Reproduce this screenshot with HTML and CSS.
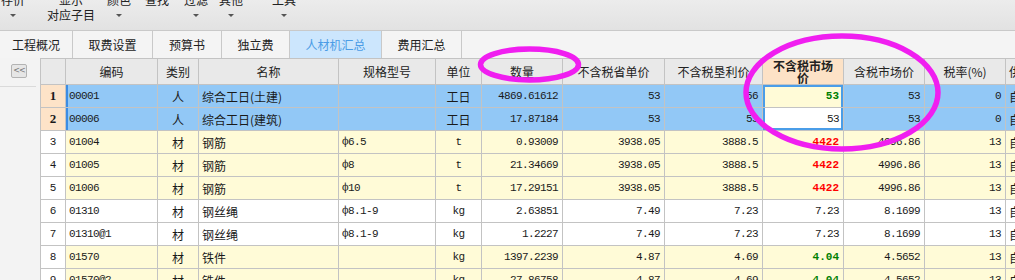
FILE: index.html
```html
<!DOCTYPE html>
<html lang="zh">

<head>
    <meta charset="UTF-8">
    <title>人材机汇总</title>
    <link rel="stylesheet" href="styles.css">
</head>

<body>
    <!-- Toolbar (scrolled, top labels clipped) -->
    <div class="toolbar">
        <div class="tool t1"><span class="lbl">存价</span><i class="arr"></i></div>
        <div class="tool t2"><span class="lbl">显示</span><span class="sub">对应子目</span></div>
        <div class="tool t3"><span class="lbl">颜色</span><i class="arr"></i></div>
        <div class="tool t4"><span class="lbl">查找</span></div>
        <div class="tool t5"><span class="lbl">过滤</span><i class="arr"></i></div>
        <div class="tool t6"><span class="lbl">其他</span><i class="arr"></i></div>
        <div class="tool t7"><span class="lbl">工具</span><i class="arr"></i></div>
    </div>

    <!-- Tabs -->
    <div class="tabs">
        <div class="tab w73">工程概况</div>
        <div class="tab w80">取费设置</div>
        <div class="tab w69">预算书</div>
        <div class="tab w68">独立费</div>
        <div class="tab w92 active">人材机汇总</div>
        <div class="tab w80">费用汇总</div>
    </div>

    <div class="main">
        <div class="side">
            <div class="side-top"><button class="fold">&lt;&lt;</button></div>
        </div>

        <div class="grid-wrap">
            <table class="grid">
                <colgroup>
                    <col class="c-no">
                    <col class="c-code">
                    <col class="c-type">
                    <col class="c-name">
                    <col class="c-spec">
                    <col class="c-unit">
                    <col class="c-qty">
                    <col class="c-p1">
                    <col class="c-p2">
                    <col class="c-p3">
                    <col class="c-p4">
                    <col class="c-rate">
                    <col class="c-src">
                </colgroup>
                <thead>
                    <tr>
                        <th></th>
                        <th>编码</th>
                        <th>类别</th>
                        <th>名称</th>
                        <th>规格型号</th>
                        <th>单位</th>
                        <th>数量</th>
                        <th>不含税省单价</th>
                        <th>不含税垦利价</th>
                        <th class="hot">不含税市场<br>价</th>
                        <th>含税市场价</th>
                        <th>税率(%)</th>
                        <th class="left">供货方式</th>
                    </tr>
                </thead>
                <tbody>
                    <tr class="sel">
                        <td class="no">1</td>
                        <td class="code">00001</td>
                        <td class="mid">人</td>
                        <td>综合工日(土建)</td>
                        <td></td>
                        <td class="mid">工日</td>
                        <td class="n">4869.61612</td>
                        <td class="n">53</td>
                        <td class="n">56</td>
                        <td class="n cur1 green">53</td>
                        <td class="n">53</td>
                        <td class="n">0</td>
                        <td>自行采购</td>
                    </tr>
                    <tr class="sel">
                        <td class="no">2</td>
                        <td class="code">00006</td>
                        <td class="mid">人</td>
                        <td>综合工日(建筑)</td>
                        <td></td>
                        <td class="mid">工日</td>
                        <td class="n">17.87184</td>
                        <td class="n">53</td>
                        <td class="n">53</td>
                        <td class="n cur2">53</td>
                        <td class="n">53</td>
                        <td class="n">0</td>
                        <td>自行采购</td>
                    </tr>
                    <tr class="yel">
                        <td class="no">3</td>
                        <td class="code">01004</td>
                        <td class="mid">材</td>
                        <td>钢筋</td>
                        <td class="spec">ф6.5</td>
                        <td class="mid mono">t</td>
                        <td class="n">0.93009</td>
                        <td class="n">3938.05</td>
                        <td class="n">3888.5</td>
                        <td class="n red">4422</td>
                        <td class="n">4996.86</td>
                        <td class="n">13</td>
                        <td>自行采购</td>
                    </tr>
                    <tr class="yel">
                        <td class="no">4</td>
                        <td class="code">01005</td>
                        <td class="mid">材</td>
                        <td>钢筋</td>
                        <td class="spec">ф8</td>
                        <td class="mid mono">t</td>
                        <td class="n">21.34669</td>
                        <td class="n">3938.05</td>
                        <td class="n">3888.5</td>
                        <td class="n red">4422</td>
                        <td class="n">4996.86</td>
                        <td class="n">13</td>
                        <td>自行采购</td>
                    </tr>
                    <tr class="yel">
                        <td class="no">5</td>
                        <td class="code">01006</td>
                        <td class="mid">材</td>
                        <td>钢筋</td>
                        <td class="spec">ф10</td>
                        <td class="mid mono">t</td>
                        <td class="n">17.29151</td>
                        <td class="n">3938.05</td>
                        <td class="n">3888.5</td>
                        <td class="n red">4422</td>
                        <td class="n">4996.86</td>
                        <td class="n">13</td>
                        <td>自行采购</td>
                    </tr>
                    <tr>
                        <td class="no">6</td>
                        <td class="code">01310</td>
                        <td class="mid">材</td>
                        <td>钢丝绳</td>
                        <td class="spec">ф8.1-9</td>
                        <td class="mid mono">kg</td>
                        <td class="n">2.63851</td>
                        <td class="n">7.49</td>
                        <td class="n">7.23</td>
                        <td class="n">7.23</td>
                        <td class="n">8.1699</td>
                        <td class="n">13</td>
                        <td>自行采购</td>
                    </tr>
                    <tr>
                        <td class="no">7</td>
                        <td class="code">01310@1</td>
                        <td class="mid">材</td>
                        <td>钢丝绳</td>
                        <td class="spec">ф8.1-9</td>
                        <td class="mid mono">kg</td>
                        <td class="n">1.2227</td>
                        <td class="n">7.49</td>
                        <td class="n">7.23</td>
                        <td class="n">7.23</td>
                        <td class="n">8.1699</td>
                        <td class="n">13</td>
                        <td>自行采购</td>
                    </tr>
                    <tr class="yel">
                        <td class="no">8</td>
                        <td class="code">01570</td>
                        <td class="mid">材</td>
                        <td>铁件</td>
                        <td></td>
                        <td class="mid mono">kg</td>
                        <td class="n">1397.2239</td>
                        <td class="n">4.87</td>
                        <td class="n">4.69</td>
                        <td class="n green">4.04</td>
                        <td class="n">4.5652</td>
                        <td class="n">13</td>
                        <td>自行采购</td>
                    </tr>
                    <tr class="yel">
                        <td class="no">9</td>
                        <td class="code">01570@2</td>
                        <td class="mid">材</td>
                        <td>铁件</td>
                        <td></td>
                        <td class="mid mono">kg</td>
                        <td class="n">27.86758</td>
                        <td class="n">4.87</td>
                        <td class="n">4.69</td>
                        <td class="n green">4.04</td>
                        <td class="n">4.5652</td>
                        <td class="n">13</td>
                        <td>自行采购</td>
                    </tr>
                </tbody>
            </table>
        </div>
    </div>

    <!-- Hand-drawn annotation rings -->
    <svg class="marks" width="1015" height="280" viewBox="0 0 1015 280">
        <ellipse cx="529.5" cy="64.5" rx="49" ry="15.5" />
        <ellipse cx="842" cy="92.5" rx="96" ry="56.5" />
    </svg>
</body>

</html>
```

FILE: styles.css
```css
body {
    margin: 0;
    width: 1015px;
    height: 280px;
    overflow: hidden;
    position: relative;
    font-family: "Noto Sans CJK SC", sans-serif;
    font-size: 12px;
    color: #1a1a1a;
    background: #f3f3f3;
}

/* toolbar */
.toolbar {
    height: 30px;
    overflow: hidden;
    display: flex;
    align-items: flex-start;
    background: linear-gradient(#ececec, #e2e2e2);
}

.tool {
    display: flex;
    flex-direction: column;
    align-items: center;
    margin-top: -7px;
    color: #222;
}

.lbl {
    line-height: 14px;
}

.sub {
    line-height: 15px;
}

.arr {
    margin-top: 7px;
    width: 0;
    height: 0;
    border-left: 3px solid transparent;
    border-right: 3px solid transparent;
    border-top: 3px solid #555;
}

.t1 { width: 30px; margin-left: -2px; }
.t2 { width: 48px; margin-left: 19px; }
.t3 { width: 24px; margin-left: 12px; }
.t4 { width: 24px; margin-left: 14px; }
.t5 { width: 24px; margin-left: 15px; }
.t6 { width: 24px; margin-left: 11px; }
.t7 { width: 24px; margin-left: 29px; }

/* tabs */
.tabs {
    display: flex;
    height: 27px;
    border-top: 1px solid #c9c9c9;
    background: #f4f4f4;
}

.tab {
    box-sizing: border-box;
    border-right: 1px solid #c9c9c9;
    display: flex;
    align-items: center;
    justify-content: center;
    color: #222;
}

.tab.active {
    background: #cce6fd;
    color: #4b9ce6;
}

.w73 { width: 73px; }
.w80 { width: 80px; }
.w69 { width: 69px; }
.w68 { width: 68px; }
.w92 { width: 92px; }

/* main */
.main {
    display: flex;
    height: 222px;
}

.side {
    width: 40px;
    flex: none;
    background: #f3f3f3;
}

.side-top {
    width: 36px;
    height: 29px;
    box-sizing: border-box;
    border-bottom: 1px solid #dadada;
    padding: 6px 0 0 11px;
}

.fold {
    display: block;
    width: 16px;
    height: 14px;
    padding: 0;
    border: 1px solid #b3b3b3;
    border-radius: 2px;
    background: #e6e6e6;
    color: #777;
    font-family: "DejaVu Sans", sans-serif;
    font-size: 8px;
    line-height: 12px;
    letter-spacing: -1px;
}

.grid-wrap {
    flex: 1;
    overflow: hidden;
    background: #fff;
}

/* grid */
.grid {
    border-collapse: collapse;
    table-layout: fixed;
    width: 1045px;
}

.c-no { width: 25px; }
.c-code { width: 92px; }
.c-type { width: 41px; }
.c-name { width: 140px; }
.c-spec { width: 97px; }
.c-unit { width: 46px; }
.c-qty { width: 81px; }
.c-p1 { width: 102px; }
.c-p2 { width: 98px; }
.c-p3 { width: 81px; }
.c-p4 { width: 81px; }
.c-rate { width: 81px; }
.c-src { width: 80px; }

.grid th,
.grid td {
    border: 1px solid #c3c3c3;
    padding: 0 3px;
    white-space: nowrap;
    overflow: hidden;
}

.grid thead tr {
    height: 26px;
}

.grid tbody tr {
    height: 23px;
}

.grid th {
    background: #e9e9e9;
    font-weight: normal;
    color: #222;
    text-align: center;
}

.grid th.hot {
    background: #fde2c6;
    font-weight: bold;
    line-height: 12px;
    white-space: normal;
}

.grid th.left {
    text-align: left;
}

.grid td.no {
    text-align: center;
    font-family: "Liberation Mono", monospace;
    font-size: 11px;
    background: #fff;
}

.grid td.code {
    font-family: "Liberation Mono", monospace;
    font-size: 11px;
    letter-spacing: -0.6px;
}

.grid td.spec,
.grid td.mono {
    font-family: "Liberation Mono", monospace;
    font-size: 11px;
    letter-spacing: -0.6px;
}

.grid td.mid {
    text-align: center;
}

.grid td.n {
    text-align: right;
    padding-right: 4px;
    font-family: "Liberation Mono", monospace;
    font-size: 11px;
    letter-spacing: -0.6px;
}

.grid tr.sel td {
    background: #92c8f6;
}

.grid tr.sel td.no {
    background: #fde3c8;
    font-family: "Liberation Serif", serif;
    font-size: 13px;
    font-weight: bold;
}

.grid tr.sel td.code {
    box-shadow: inset 2px 0 0 #3c8de4;
}

.grid tr.yel td {
    background: #fffbd7;
}

.grid tr.yel td.no {
    background: #fff;
}

.grid tr.sel td.cur1 {
    background: #fffbd7;
    box-shadow: inset 2px 2px 0 #4a9de8, inset -2px 0 0 #4a9de8;
}

.grid tr.sel td.cur2 {
    background: #fff;
    box-shadow: inset 2px -2px 0 #4a9de8, inset -2px 0 0 #4a9de8;
}

.grid td.red {
    color: #ff0000;
    font-weight: bold;
    letter-spacing: 0;
}

.grid td.green {
    color: #008000;
    font-weight: bold;
    letter-spacing: 0;
}

/* annotation */
.marks {
    position: absolute;
    top: 0;
    left: 0;
    pointer-events: none;
}

.marks ellipse {
    fill: none;
    stroke: #f01ef0;
    stroke-width: 5.5;
}
```
